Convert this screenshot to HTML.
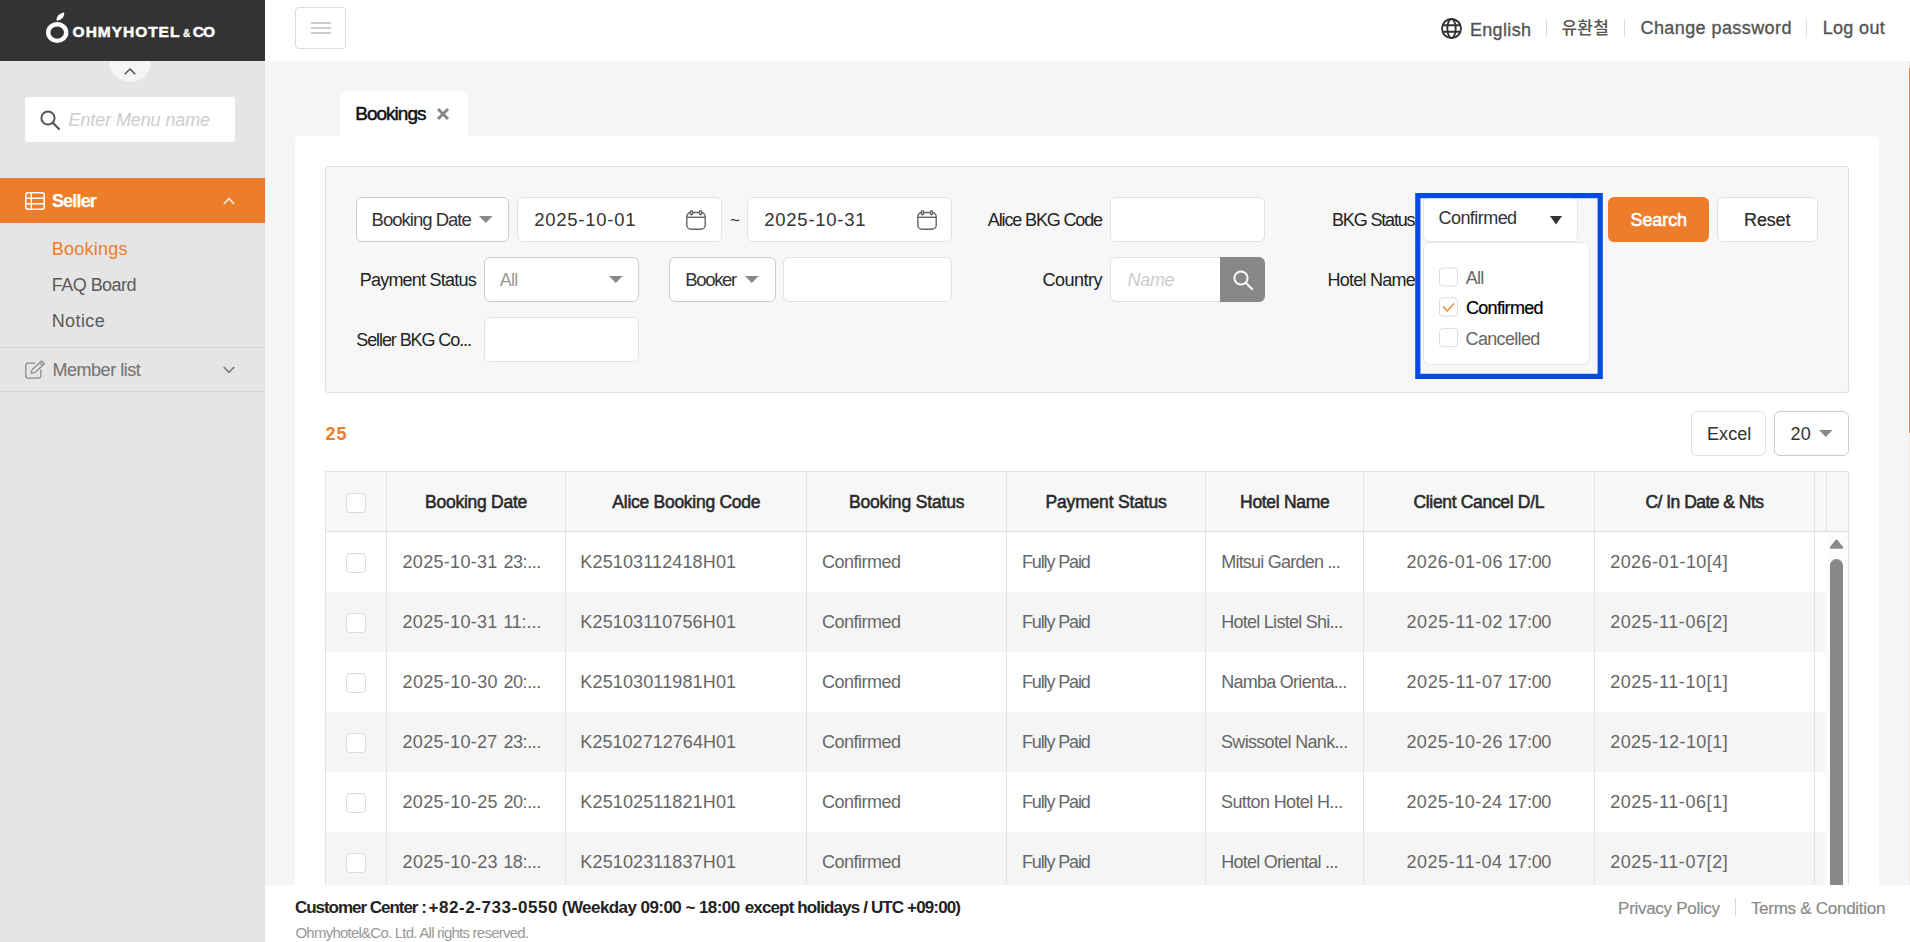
<!DOCTYPE html>
<html lang="en"><head><meta charset="utf-8"><title>Bookings</title>
<style>
*{box-sizing:border-box;margin:0;padding:0}
html,body{width:1910px;height:942px;overflow:hidden}
body{position:relative;background:#f5f5f5;font-family:"Liberation Sans","Noto Sans CJK KR",sans-serif;color:#333}
.t{position:absolute;white-space:pre;line-height:24px;display:block}
.b{position:absolute;display:block}
.inp{position:absolute;background:#fff;border:1px solid #e2e2e2;border-radius:6px;height:45px}
.sel{border-color:#ccc}
.cb{position:absolute;width:20px;height:20px;background:#fff;border:1px solid #dcdcdc;border-radius:4px}
.vl{position:absolute;width:1px;background:#e2e2e2}
svg{position:absolute;overflow:visible}
.c19{width:19px;height:19px;border-radius:3px}

</style></head>
<body>
<!-- sidebar -->
<div class="b" style="left:0;top:0;width:265px;height:942px;background:#e5e5e5"></div>
<div class="b" style="left:109px;top:40px;width:42px;height:42px;border-radius:50%;background:#f5f5f5"></div>
<div class="b" style="left:0;top:0;width:265px;height:61px;background:#333"></div>
<svg style="left:45px;top:11px" width="26" height="34" viewBox="0 0 26 34"><ellipse cx="12.2" cy="21.6" rx="9" ry="8.3" fill="none" stroke="#fff" stroke-width="4.4"/><path d="M11.6 9.8 C11.2 5.2 14.6 2.2 19.2 1.6 C19.6 6 16.6 9.4 11.6 9.8Z" fill="#fff"/></svg>
<svg style="left:124px;top:68px" width="12" height="7" viewBox="0 0 12 7"><path d="M0.7 6.3 L6 1 L11.3 6.3" fill="none" stroke="#555" stroke-width="1.5"/></svg>
<div class="b" style="left:25px;top:97px;width:210px;height:45px;background:#fff;border-radius:3px"></div>
<svg style="left:40px;top:110px" width="20" height="20" viewBox="0 0 20 20"><circle cx="8" cy="8" r="6.6" fill="none" stroke="#555" stroke-width="2"/><path d="M12.8 12.8 L19 19" stroke="#555" stroke-width="2.2" stroke-linecap="round"/></svg>
<div class="b" style="left:0;top:178px;width:265px;height:45px;background:#ee7d2a"></div>
<svg style="left:25px;top:192px" width="20" height="18" viewBox="0 0 20 18"><rect x="0.75" y="0.75" width="18.5" height="16.5" rx="2.5" fill="none" stroke="#fff" stroke-width="1.5"/><path d="M0.75 6.2H19.25M0.75 11.7H19.25M6.3 0.75V17.25" fill="none" stroke="#fff" stroke-width="1.5"/></svg>
<svg style="left:223px;top:197px" width="12" height="8" viewBox="0 0 12 8"><path d="M0.8 7 L6 1.6 L11.2 7" fill="none" stroke="#fff" stroke-opacity="0.82" stroke-width="1.7"/></svg>
<div class="b" style="left:0;top:347px;width:265px;height:1px;background:#d4d4d4"></div>
<div class="b" style="left:0;top:391px;width:265px;height:1px;background:#d4d4d4"></div>
<svg style="left:25px;top:360px" width="21" height="19" viewBox="0 0 21 19"><path d="M10 3.2H3.2Q0.8 3.2 0.8 5.6V15.8Q0.8 18.2 3.2 18.2H13.4Q15.8 18.2 15.8 15.8V9.5" fill="none" stroke="#8a8a8a" stroke-width="1.25"/><path d="M6.2 13.2 L7 9.8 L16.6 1 L19.4 3.8 L9.8 12.6 Z M14.8 2.8 L17.6 5.6" fill="none" stroke="#8a8a8a" stroke-width="1.2" stroke-linejoin="round"/></svg>
<svg style="left:223px;top:366px" width="12" height="8" viewBox="0 0 12 8"><path d="M0.8 1 L6 6.4 L11.2 1" fill="none" stroke="#777" stroke-width="1.6"/></svg>
<!-- top bar -->
<div class="b" style="left:265px;top:0;width:1645px;height:61px;background:#fff"></div>
<div class="b" style="left:295px;top:7px;width:51px;height:42px;border:1px solid #ddd;border-radius:4px;background:#fff"></div>
<div class="b" style="left:311px;top:22px;width:20px;height:2px;background:#ccc"></div>
<div class="b" style="left:311px;top:27px;width:20px;height:2px;background:#ccc"></div>
<div class="b" style="left:311px;top:32px;width:20px;height:2px;background:#ccc"></div>
<svg style="left:1441px;top:18px" width="21" height="21" viewBox="0 0 21 21"><g fill="none" stroke="#333" stroke-width="1.9"><circle cx="10.5" cy="10.5" r="9.5"/><ellipse cx="10.5" cy="10.5" rx="4.2" ry="9.5"/><path d="M1.6 7.2H19.4M1.6 13.8H19.4"/></g></svg>
<div class="vl" style="left:1546px;top:19px;height:18px;background:#d8d8d8"></div>
<div class="vl" style="left:1624px;top:19px;height:18px;background:#d8d8d8"></div>
<div class="vl" style="left:1806px;top:19px;height:18px;background:#d8d8d8"></div>
<span class="t" style="left:1561.5px;top:17px;font-size:17px;letter-spacing:0.2px;font-weight:500;color:#555;font-family:'Liberation Sans','Noto Sans CJK KR',sans-serif">유환철</span>
<!-- tab + panel -->
<div class="b" style="left:340px;top:91px;width:128px;height:46px;background:#fff;border-radius:8px 8px 0 0"></div>
<svg style="left:437px;top:107.6px" width="12" height="12" viewBox="0 0 12 12"><path d="M1 1 L11 11 M11 1 L1 11" stroke="#868686" stroke-width="2.9"/></svg>
<div class="b" style="left:295px;top:136px;width:1584px;height:760px;background:#fff;border-radius:5px 5px 0 0"></div>
<div class="b" style="left:325px;top:166px;width:1524px;height:227px;background:#f7f7f7;border:1px solid #dedede;border-radius:3px"></div>
<!-- filter row 1 -->
<div class="inp sel" style="left:356px;top:197px;width:153px"></div>
<svg style="left:479.2px;top:216px" width="13.6" height="7" viewBox="0 0 13.6 7"><path d="M0 0H13.6L6.8 7Z" fill="#888"/></svg>
<div class="inp" style="left:517px;top:197px;width:205px"></div>
<svg class="cal" style="left:686px;top:210px" width="20" height="20" viewBox="0 0 20 20"><g fill="none" stroke="#666" stroke-width="1.4"><rect x="0.8" y="2.5" width="18.4" height="16.7" rx="4.2"/><path d="M0.8 7.3H19.2"/><rect x="4.5" y="0.6" width="2" height="4.2" rx="1" fill="#fff"/><rect x="13.5" y="0.6" width="2" height="4.2" rx="1" fill="#fff"/></g></svg>
<div class="inp" style="left:747px;top:197px;width:205px"></div>
<svg class="cal" style="left:917px;top:210px" width="20" height="20" viewBox="0 0 20 20"><g fill="none" stroke="#666" stroke-width="1.4"><rect x="0.8" y="2.5" width="18.4" height="16.7" rx="4.2"/><path d="M0.8 7.3H19.2"/><rect x="4.5" y="0.6" width="2" height="4.2" rx="1" fill="#fff"/><rect x="13.5" y="0.6" width="2" height="4.2" rx="1" fill="#fff"/></g></svg>
<div class="inp" style="left:1110px;top:197px;width:155px"></div>
<!-- blue highlight -->
<div class="inp" style="left:1423px;top:197px;width:155px;border-color:#e8e8e8"></div>
<svg style="left:1550px;top:215.5px" width="12" height="8.5" viewBox="0 0 12 8.5"><path d="M0 0H12L6 8.5Z" fill="#333"/></svg>
<div class="b" style="left:1423px;top:242px;width:167px;height:123px;background:#fff;border:1px solid #e5e5e5;border-radius:7px"></div>
<svg style="left:0;top:0" width="1910" height="400"><g fill="#fff" stroke="#dcdcdc" stroke-width="1"><rect x="1439.5" y="268" width="18" height="18" rx="3"/><rect x="1439.5" y="297.8" width="18" height="18.3" rx="3"/><rect x="1439.5" y="328.6" width="18" height="18" rx="3"/></g><rect x="1417.8" y="195.6" width="182.4" height="180.8" fill="none" stroke="#0349e3" stroke-width="5.2"/></svg>
<svg style="left:1442px;top:302px" width="13" height="11" viewBox="0 0 13 11"><path d="M1 4.6 L5.2 9 L12 1.4" fill="none" stroke="#ee7d2a" stroke-width="1.4"/></svg>
<div class="b" style="left:1608px;top:197px;width:101px;height:45px;background:#ee7d2a;border-radius:6px"></div>
<div class="inp" style="left:1717px;top:197px;width:101px;border-color:#e0e0e0"></div>
<!-- filter row 2 -->
<div class="inp sel" style="left:484px;top:257px;width:155px"></div>
<svg style="left:609.2px;top:276px" width="13.6" height="7" viewBox="0 0 13.6 7"><path d="M0 0H13.6L6.8 7Z" fill="#888"/></svg>
<div class="inp sel" style="left:669px;top:257px;width:107px"></div>
<svg style="left:745.3px;top:276px" width="13.6" height="7" viewBox="0 0 13.6 7"><path d="M0 0H13.6L6.8 7Z" fill="#888"/></svg>
<div class="inp" style="left:783px;top:257px;width:169px"></div>
<div class="inp" style="left:1110px;top:257px;width:155px"></div>
<div class="b" style="left:1220px;top:257px;width:45px;height:45px;background:#888;border-radius:0 6px 6px 0"></div>
<svg style="left:1233px;top:270px" width="20" height="20" viewBox="0 0 20 20"><circle cx="8" cy="8" r="6.6" fill="none" stroke="#fff" stroke-width="2"/><path d="M12.8 12.8 L19 19" stroke="#fff" stroke-width="2.2" stroke-linecap="round"/></svg>
<!-- filter row 3 -->
<div class="inp" style="left:484px;top:317px;width:155px"></div>
<!-- table toolbar -->
<div class="inp" style="left:1691px;top:411px;width:75px;border-color:#e0e0e0"></div>
<div class="inp sel" style="left:1774px;top:411px;width:75px"></div>
<svg style="left:1819.3px;top:430px" width="13.6" height="7" viewBox="0 0 13.6 7"><path d="M0 0H13.6L6.8 7Z" fill="#888"/></svg>
<!-- table -->
<div class="b" style="left:325px;top:471px;width:1524px;height:61px;background:#f7f7f7;border:1px solid #e2e2e2;border-bottom-color:#ddd"></div>
<div class="b" style="left:326px;top:592px;width:1499px;height:60px;background:#f5f5f5"></div>
<div class="b" style="left:326px;top:712px;width:1499px;height:60px;background:#f5f5f5"></div>
<div class="b" style="left:326px;top:832px;width:1499px;height:60px;background:#f5f5f5"></div>
<div class="vl" style="left:325px;top:471px;height:420px"></div>
<div class="vl" style="left:386px;top:471px;height:420px"></div>
<div class="vl" style="left:565px;top:471px;height:420px"></div>
<div class="vl" style="left:806px;top:471px;height:420px"></div>
<div class="vl" style="left:1006px;top:471px;height:420px"></div>
<div class="vl" style="left:1205px;top:471px;height:420px"></div>
<div class="vl" style="left:1363px;top:471px;height:420px"></div>
<div class="vl" style="left:1594px;top:471px;height:420px"></div>
<div class="vl" style="left:1814px;top:471px;height:420px"></div>
<div class="vl" style="left:1826px;top:471px;height:61px"></div>
<div class="vl" style="left:1848px;top:471px;height:420px"></div>
<div class="cb" style="left:346px;top:493px"></div>
<div class="cb" style="left:346px;top:553px"></div>
<div class="cb" style="left:346px;top:613px"></div>
<div class="cb" style="left:346px;top:673px"></div>
<div class="cb" style="left:346px;top:733px"></div>
<div class="cb" style="left:346px;top:793px"></div>
<div class="cb" style="left:346px;top:853px"></div>
<!-- scrollbar -->
<div class="b" style="left:1827px;top:532px;width:21px;height:353px;background:#fcfcfc"></div>
<svg style="left:1829px;top:539px" width="15" height="10" viewBox="0 0 15 10"><path d="M7.5 1.8 L13 8.6 H2 Z" fill="#8a8a8a" stroke="#8a8a8a" stroke-width="2.4" stroke-linejoin="round"/></svg>
<div class="b" style="left:1830px;top:559px;width:13px;height:340px;background:#888;border-radius:6.5px 6.5px 0 0"></div>
<!-- footer -->
<div class="b" style="left:265px;top:885px;width:1645px;height:57px;background:#fff"></div>
<div class="vl" style="left:1735px;top:898px;height:18px;background:#d8d8d8"></div>
<!-- right edge scrollbar -->
<div class="b" style="left:1909px;top:61px;width:1px;height:824px;background:#f6e9e1"></div>
<div class="b" style="left:1908px;top:67px;width:1px;height:367px;background:#f9fcfe"></div>
<div class="b" style="left:1909px;top:68px;width:1px;height:365px;background:#ee7d2a"></div>

<span class="t" style="left:72.62px;top:20.13px;font-size:15.5px;color:#fff;letter-spacing:0.970px;font-weight:700;-webkit-text-stroke:0.5px #fff;">OHMYHOTEL</span>
<span class="t" style="left:182.98px;top:22.03px;font-size:10px;color:#fff;font-weight:700;-webkit-text-stroke:0.3px #fff;">&amp;</span>
<span class="t" style="left:192.65px;top:20.13px;font-size:15.5px;color:#fff;letter-spacing:-0.800px;font-weight:700;-webkit-text-stroke:0.5px #fff;">CO</span>
<span class="t" style="left:68.55px;top:107.56px;font-size:18px;color:#ccc;letter-spacing:-0.111px;font-style:italic;">Enter Menu name</span>
<span class="t" style="left:51.89px;top:188.76px;font-size:18px;color:#fff;letter-spacing:-0.817px;font-weight:700;-webkit-text-stroke:0.25px #fff;">Seller</span>
<span class="t" style="left:51.68px;top:236.76px;font-size:18px;color:#ee7d2a;letter-spacing:0.267px;">Bookings</span>
<span class="t" style="left:51.68px;top:272.76px;font-size:18px;color:#5a5a5a;letter-spacing:-0.514px;">FAQ Board</span>
<span class="t" style="left:51.68px;top:308.76px;font-size:18px;color:#5a5a5a;letter-spacing:0.412px;">Notice</span>
<span class="t" style="left:52.50px;top:357.76px;font-size:18px;color:#777;letter-spacing:-0.474px;-webkit-text-stroke:0.15px #777;">Member list</span>
<span class="t" style="left:1469.93px;top:17.76px;font-size:18px;color:#555;letter-spacing:0.338px;-webkit-text-stroke:0.35px #555;">English</span>
<span class="t" style="left:1640.47px;top:15.76px;font-size:18px;color:#555;letter-spacing:0.420px;-webkit-text-stroke:0.35px #555;">Change password</span>
<span class="t" style="left:1822.65px;top:15.76px;font-size:18px;color:#555;letter-spacing:0.339px;-webkit-text-stroke:0.35px #555;">Log out</span>
<span class="t" style="left:355.20px;top:102.41px;font-size:19px;color:#111;letter-spacing:-0.973px;-webkit-text-stroke:0.5px #111;">Bookings</span>
<span class="t" style="left:371.60px;top:207.79px;font-size:18.5px;color:#333;letter-spacing:-0.990px;">Booking Date</span>
<span class="t" style="left:534.34px;top:207.79px;font-size:18.5px;color:#333;letter-spacing:0.720px;">2025-10-01</span>
<span class="t" style="left:729.99px;top:209.11px;font-size:17px;color:#333;">~</span>
<span class="t" style="left:764.34px;top:207.79px;font-size:18.5px;color:#333;letter-spacing:0.726px;">2025-10-31</span>
<span class="t" style="left:987.79px;top:207.96px;font-size:18px;color:#222;letter-spacing:-1.132px;">Alice BKG Code</span>
<span class="t" style="left:1332.04px;top:207.96px;font-size:18px;color:#222;letter-spacing:-1.166px;">BKG Status</span>
<span class="t" style="left:1438.51px;top:205.96px;font-size:18px;color:#333;letter-spacing:-0.550px;">Confirmed</span>
<span class="t" style="left:1630.49px;top:207.56px;font-size:18px;color:#fff;letter-spacing:-0.089px;-webkit-text-stroke:0.6px #fff;">Search</span>
<span class="t" style="left:1744.05px;top:207.56px;font-size:18px;color:#2a2a2a;letter-spacing:-0.147px;-webkit-text-stroke:0.2px #2a2a2a;">Reset</span>
<span class="t" style="left:359.68px;top:267.96px;font-size:18px;color:#222;letter-spacing:-0.769px;">Payment Status</span>
<span class="t" style="left:499.87px;top:267.96px;font-size:18px;color:#999;letter-spacing:-0.814px;">All</span>
<span class="t" style="left:685.20px;top:267.79px;font-size:18.5px;color:#333;letter-spacing:-1.321px;">Booker</span>
<span class="t" style="left:1042.51px;top:267.96px;font-size:18px;color:#222;letter-spacing:-0.499px;">Country</span>
<span class="t" style="left:1127.55px;top:267.96px;font-size:18px;color:#ccc;letter-spacing:-0.310px;font-style:italic;">Name</span>
<span class="t" style="left:1327.61px;top:267.96px;font-size:18px;color:#222;letter-spacing:-0.771px;">Hotel Name</span>
<span class="t" style="left:356.27px;top:327.96px;font-size:18px;color:#222;letter-spacing:-1.089px;">Seller BKG Co...</span>
<span class="t" style="left:1465.83px;top:265.96px;font-size:18px;color:#666;letter-spacing:-0.834px;">All</span>
<span class="t" style="left:1465.89px;top:295.76px;font-size:18px;color:#000;letter-spacing:-0.660px;-webkit-text-stroke:0.22px #000;">Confirmed</span>
<span class="t" style="left:1465.59px;top:326.56px;font-size:18px;color:#666;letter-spacing:-0.672px;">Cancelled</span>
<span class="t" style="left:325.49px;top:422.16px;font-size:18px;color:#ee7d2a;letter-spacing:1.061px;font-weight:700;">25</span>
<span class="t" style="left:1707.04px;top:421.96px;font-size:18px;color:#333;letter-spacing:0.075px;">Excel</span>
<span class="t" style="left:1790.41px;top:421.96px;font-size:18px;color:#333;letter-spacing:0.212px;">20</span>
<span class="t" style="left:425.09px;top:490.33px;font-size:17.5px;color:#2a2a2a;letter-spacing:-0.264px;-webkit-text-stroke:0.55px #2a2a2a;">Booking Date</span>
<span class="t" style="left:612.36px;top:490.33px;font-size:17.5px;color:#2a2a2a;letter-spacing:-0.272px;-webkit-text-stroke:0.55px #2a2a2a;">Alice Booking Code</span>
<span class="t" style="left:848.94px;top:490.33px;font-size:17.5px;color:#2a2a2a;letter-spacing:-0.168px;-webkit-text-stroke:0.55px #2a2a2a;">Booking Status</span>
<span class="t" style="left:1045.49px;top:490.33px;font-size:17.5px;color:#2a2a2a;letter-spacing:-0.166px;-webkit-text-stroke:0.55px #2a2a2a;">Payment Status</span>
<span class="t" style="left:1240.09px;top:490.33px;font-size:17.5px;color:#2a2a2a;letter-spacing:-0.313px;-webkit-text-stroke:0.55px #2a2a2a;">Hotel Name</span>
<span class="t" style="left:1413.47px;top:490.33px;font-size:17.5px;color:#2a2a2a;letter-spacing:-0.325px;-webkit-text-stroke:0.55px #2a2a2a;">Client Cancel D/L</span>
<span class="t" style="left:1645.49px;top:490.33px;font-size:17.5px;color:#2a2a2a;letter-spacing:-0.525px;-webkit-text-stroke:0.55px #2a2a2a;">C/ In Date &amp; Nts</span>
<span class="t" style="left:402.56px;top:550.06px;font-size:18px;color:#666;letter-spacing:0.302px;">2025-10-31</span>
<span class="t" style="left:503.41px;top:550.06px;font-size:18px;color:#666;letter-spacing:-0.426px;">23:...</span>
<span class="t" style="left:580.35px;top:550.06px;font-size:18px;color:#666;letter-spacing:0.136px;">K25103112418H01</span>
<span class="t" style="left:821.96px;top:550.06px;font-size:18px;color:#666;letter-spacing:-0.481px;">Confirmed</span>
<span class="t" style="left:1021.91px;top:550.06px;font-size:18px;color:#666;letter-spacing:-1.117px;">Fully Paid</span>
<span class="t" style="left:1221.20px;top:550.06px;font-size:18px;color:#666;letter-spacing:-0.775px;">Mitsui Garden ...</span>
<span class="t" style="left:1406.41px;top:550.06px;font-size:18px;color:#666;letter-spacing:0.440px;">2026-01-06</span>
<span class="t" style="left:1507.64px;top:550.06px;font-size:18px;color:#666;letter-spacing:-0.340px;">17:00</span>
<span class="t" style="left:1610.17px;top:550.06px;font-size:18px;color:#666;letter-spacing:0.459px;">2026-01-10[4]</span>
<span class="t" style="left:402.56px;top:610.06px;font-size:18px;color:#666;letter-spacing:0.302px;">2025-10-31</span>
<span class="t" style="left:503.15px;top:610.06px;font-size:18px;color:#666;letter-spacing:-0.108px;">11:...</span>
<span class="t" style="left:580.35px;top:610.06px;font-size:18px;color:#666;letter-spacing:0.136px;">K25103110756H01</span>
<span class="t" style="left:821.96px;top:610.06px;font-size:18px;color:#666;letter-spacing:-0.481px;">Confirmed</span>
<span class="t" style="left:1021.91px;top:610.06px;font-size:18px;color:#666;letter-spacing:-1.117px;">Fully Paid</span>
<span class="t" style="left:1221.20px;top:610.06px;font-size:18px;color:#666;letter-spacing:-0.729px;">Hotel Listel Shi...</span>
<span class="t" style="left:1406.41px;top:610.06px;font-size:18px;color:#666;letter-spacing:0.602px;">2025-11-02</span>
<span class="t" style="left:1507.64px;top:610.06px;font-size:18px;color:#666;letter-spacing:-0.340px;">17:00</span>
<span class="t" style="left:1610.17px;top:610.06px;font-size:18px;color:#666;letter-spacing:0.570px;">2025-11-06[2]</span>
<span class="t" style="left:402.56px;top:670.06px;font-size:18px;color:#666;letter-spacing:0.318px;">2025-10-30</span>
<span class="t" style="left:503.41px;top:670.06px;font-size:18px;color:#666;letter-spacing:-0.426px;">20:...</span>
<span class="t" style="left:580.35px;top:670.06px;font-size:18px;color:#666;letter-spacing:0.136px;">K25103011981H01</span>
<span class="t" style="left:821.96px;top:670.06px;font-size:18px;color:#666;letter-spacing:-0.481px;">Confirmed</span>
<span class="t" style="left:1021.91px;top:670.06px;font-size:18px;color:#666;letter-spacing:-1.117px;">Fully Paid</span>
<span class="t" style="left:1221.20px;top:670.06px;font-size:18px;color:#666;letter-spacing:-0.730px;">Namba Orienta...</span>
<span class="t" style="left:1406.41px;top:670.06px;font-size:18px;color:#666;letter-spacing:0.602px;">2025-11-07</span>
<span class="t" style="left:1507.64px;top:670.06px;font-size:18px;color:#666;letter-spacing:-0.340px;">17:00</span>
<span class="t" style="left:1610.17px;top:670.06px;font-size:18px;color:#666;letter-spacing:0.570px;">2025-11-10[1]</span>
<span class="t" style="left:402.56px;top:730.06px;font-size:18px;color:#666;letter-spacing:0.304px;">2025-10-27</span>
<span class="t" style="left:503.41px;top:730.06px;font-size:18px;color:#666;letter-spacing:-0.426px;">23:...</span>
<span class="t" style="left:580.35px;top:730.06px;font-size:18px;color:#666;letter-spacing:0.040px;">K25102712764H01</span>
<span class="t" style="left:821.96px;top:730.06px;font-size:18px;color:#666;letter-spacing:-0.481px;">Confirmed</span>
<span class="t" style="left:1021.91px;top:730.06px;font-size:18px;color:#666;letter-spacing:-1.117px;">Fully Paid</span>
<span class="t" style="left:1221.04px;top:730.06px;font-size:18px;color:#666;letter-spacing:-0.684px;">Swissotel Nank...</span>
<span class="t" style="left:1406.41px;top:730.06px;font-size:18px;color:#666;letter-spacing:0.440px;">2025-10-26</span>
<span class="t" style="left:1507.64px;top:730.06px;font-size:18px;color:#666;letter-spacing:-0.340px;">17:00</span>
<span class="t" style="left:1610.17px;top:730.06px;font-size:18px;color:#666;letter-spacing:0.459px;">2025-12-10[1]</span>
<span class="t" style="left:402.56px;top:790.06px;font-size:18px;color:#666;letter-spacing:0.316px;">2025-10-25</span>
<span class="t" style="left:503.41px;top:790.06px;font-size:18px;color:#666;letter-spacing:-0.426px;">20:...</span>
<span class="t" style="left:580.35px;top:790.06px;font-size:18px;color:#666;letter-spacing:0.136px;">K25102511821H01</span>
<span class="t" style="left:821.96px;top:790.06px;font-size:18px;color:#666;letter-spacing:-0.481px;">Confirmed</span>
<span class="t" style="left:1021.91px;top:790.06px;font-size:18px;color:#666;letter-spacing:-1.117px;">Fully Paid</span>
<span class="t" style="left:1221.04px;top:790.06px;font-size:18px;color:#666;letter-spacing:-0.623px;">Sutton Hotel H...</span>
<span class="t" style="left:1406.41px;top:790.06px;font-size:18px;color:#666;letter-spacing:0.397px;">2025-10-24</span>
<span class="t" style="left:1507.64px;top:790.06px;font-size:18px;color:#666;letter-spacing:-0.340px;">17:00</span>
<span class="t" style="left:1610.17px;top:790.06px;font-size:18px;color:#666;letter-spacing:0.570px;">2025-11-06[1]</span>
<span class="t" style="left:402.56px;top:850.06px;font-size:18px;color:#666;letter-spacing:0.332px;">2025-10-23</span>
<span class="t" style="left:503.15px;top:850.06px;font-size:18px;color:#666;letter-spacing:-0.375px;">18:...</span>
<span class="t" style="left:580.35px;top:850.06px;font-size:18px;color:#666;letter-spacing:0.136px;">K25102311837H01</span>
<span class="t" style="left:821.96px;top:850.06px;font-size:18px;color:#666;letter-spacing:-0.481px;">Confirmed</span>
<span class="t" style="left:1021.91px;top:850.06px;font-size:18px;color:#666;letter-spacing:-1.117px;">Fully Paid</span>
<span class="t" style="left:1221.20px;top:850.06px;font-size:18px;color:#666;letter-spacing:-0.755px;">Hotel Oriental ...</span>
<span class="t" style="left:1406.41px;top:850.06px;font-size:18px;color:#666;letter-spacing:0.545px;">2025-11-04</span>
<span class="t" style="left:1507.64px;top:850.06px;font-size:18px;color:#666;letter-spacing:-0.340px;">17:00</span>
<span class="t" style="left:1610.17px;top:850.06px;font-size:18px;color:#666;letter-spacing:0.570px;">2025-11-07[2]</span>
<span class="t" style="left:294.88px;top:895.91px;font-size:17px;color:#222;letter-spacing:-1.022px;font-weight:700;">Customer Center :</span>
<span class="t" style="left:428.42px;top:895.91px;font-size:17px;color:#222;letter-spacing:0.584px;font-weight:700;">+82-2-733-0550</span>
<span class="t" style="left:561.83px;top:895.91px;font-size:17px;color:#222;letter-spacing:-0.560px;font-weight:700;">(Weekday 09:00 ~ 18:00</span>
<span class="t" style="left:744.76px;top:895.91px;font-size:17px;color:#222;letter-spacing:-0.865px;font-weight:700;">except holidays / UTC +09:00)</span>
<span class="t" style="left:295.44px;top:921.00px;font-size:15px;color:#999;letter-spacing:-0.764px;">Ohmyhotel&amp;Co. Ltd. All rights reserved.</span>
<span class="t" style="left:1618.11px;top:897.11px;font-size:17px;color:#888;letter-spacing:-0.296px;-webkit-text-stroke:0.15px #888;">Privacy Policy</span>
<span class="t" style="left:1750.88px;top:897.11px;font-size:17px;color:#888;letter-spacing:-0.270px;-webkit-text-stroke:0.15px #888;">Terms &amp; Condition</span>
</body></html>
